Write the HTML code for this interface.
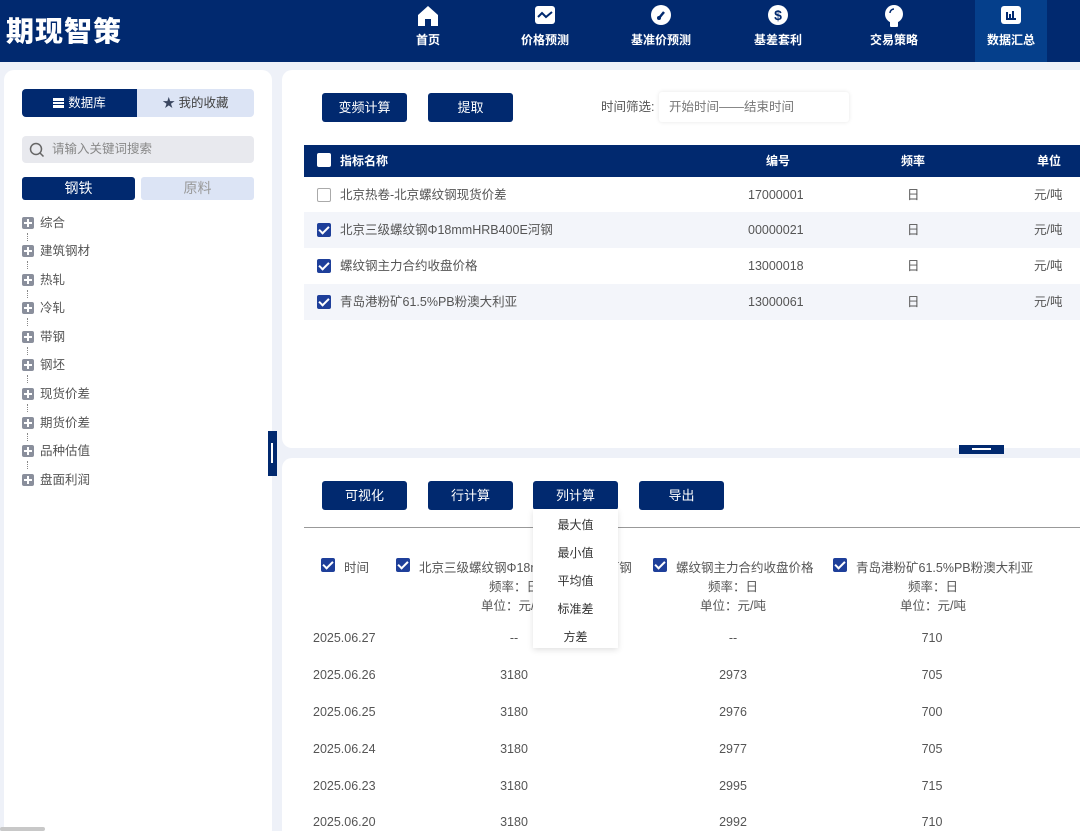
<!DOCTYPE html>
<html><head><meta charset="utf-8"><style>
*{margin:0;padding:0;box-sizing:border-box}
html{overflow:hidden;width:1080px;height:831px}
body{width:1080px;height:831px;overflow:hidden;background:#eef1f8;font-family:"Liberation Sans","Noto Sans CJK SC",sans-serif;position:relative;color:#555}
.abs{position:absolute}
.hdr{left:0;top:0;width:1080px;height:62px;background:#01296f}
.logo{left:6px;top:10px;color:#fff;font-size:28px;font-weight:900;letter-spacing:1px}
.nav{top:0;height:62px;width:90px;color:#fff;font-size:12px;font-weight:bold;text-align:center}
.nav span{position:absolute;left:0;right:0;top:31px}
.nav svg{position:absolute;left:50%;top:4px;transform:translateX(-50%)}
.panel{background:#fff;border-radius:10px}
.btn{background:#01296f;color:#fff;font-size:13px;text-align:center;border-radius:3px;height:29px;line-height:29px;width:85px}
.th{color:#fff;font-size:12px;font-weight:bold;line-height:32px;top:145px}
.row{left:304px;width:776px;height:36px;font-size:12.5px;color:#555}
.row div{position:absolute;top:0;line-height:36px}
.row div.cb,.row div.cbe{top:11px}
.cb{width:14px;height:14px;border-radius:2px;background:#1e3f9a}
.cb:after{content:"";position:absolute;left:4px;top:1px;width:4px;height:8px;border:solid #fff;border-width:0 2px 2px 0;transform:rotate(45deg)}
.cbe{width:14px;height:14px;border:1px solid #aaa;border-radius:2px;background:#fff}
.tree{left:22px;font-size:12.5px;color:#555;line-height:14px}
.plus{position:absolute;left:0;top:1px;width:12px;height:12px;background:#8a8f9c;border-radius:2px}
.plus:before{content:"";position:absolute;left:2px;top:5px;width:8px;height:2px;background:#fff}
.plus:after{content:"";position:absolute;left:5px;top:2px;width:2px;height:8px;background:#fff}
.dl{position:absolute;left:5px;top:17px;width:1px;height:8px;border-left:1px dotted #888}
.d{font-size:12.5px;color:#555;width:120px;text-align:center}
</style></head><body>
<div class="abs hdr"></div>
<div class="abs logo">期现智策</div>
<div class="abs" style="left:975px;top:0;width:72px;height:62px;background:#053f8b"></div>
<div class="abs nav" style="left:383px"><svg width="24" height="24" viewBox="0 0 24 24"><path d="M2 11L12 2l10 9v11h-7v-7h-6v7H2z" fill="#fff"/></svg><span>首页</span></div>
<div class="abs nav" style="left:500px"><svg width="22" height="22" viewBox="0 0 22 22"><rect x="1" y="2" width="20" height="18" rx="3" fill="#fff"/><path d="M4 13l4-4 4 4 6-5" stroke="#01296f" stroke-width="2" fill="none"/></svg><span>价格预测</span></div>
<div class="abs nav" style="left:616px"><svg width="22" height="22" viewBox="0 0 22 22"><circle cx="11" cy="11" r="10" fill="#fff"/><path d="M9 14l5-6" stroke="#01296f" stroke-width="2.5"/><circle cx="9" cy="14" r="2" fill="#01296f"/></svg><span>基准价预测</span></div>
<div class="abs nav" style="left:733px"><svg width="22" height="22" viewBox="0 0 22 22"><circle cx="11" cy="11" r="10" fill="#fff"/><text x="11" y="16" font-size="14" font-weight="bold" text-anchor="middle" fill="#01296f" font-family="Liberation Sans">$</text></svg><span>基差套利</span></div>
<div class="abs nav" style="left:849px"><svg width="22" height="26" viewBox="0 0 22 26"><circle cx="11" cy="10" r="9" fill="#fff"/><rect x="7" y="17" width="8" height="6" rx="1" fill="#fff"/><path d="M7 9a4 4 0 0 1 4-4" stroke="#01296f" stroke-width="1.5" fill="none"/></svg><span>交易策略</span></div>
<div class="abs nav" style="left:966px"><svg width="22" height="22" viewBox="0 0 22 22"><rect x="1" y="2" width="20" height="18" rx="3" fill="#fff"/><path d="M6 15h10M7 14V8M10 14V10M13 14V7" stroke="#01296f" stroke-width="2"/></svg><span>数据汇总</span></div>

<!-- left panel -->
<div class="abs panel" style="left:4px;top:70px;width:268px;height:770px"></div>
<div class="abs" style="left:22px;top:89px;width:232px;height:28px;background:#dce4f5;border-radius:4px"></div>
<div class="abs" style="left:22px;top:89px;width:115px;height:28px;background:#01296f;border-radius:4px 0 0 4px;color:#fff;font-size:12.5px;line-height:28px;text-align:center"><span style="display:inline-block;width:11px;height:10px;border-top:3px solid #fff;border-bottom:3px solid #fff;vertical-align:-1px;margin-right:4px;position:relative"><i style="position:absolute;left:0;top:1px;width:11px;height:2px;background:#fff"></i></span>数据库</div>
<div class="abs" style="left:137px;top:89px;width:117px;height:28px;color:#444;font-size:12.5px;line-height:28px;text-align:center"><span style="color:#3a4660">★</span> 我的收藏</div>
<div class="abs" style="left:22px;top:136px;width:232px;height:27px;background:#e8e9ee;border-radius:4px;font-size:12.5px;color:#888;line-height:27px;padding-left:30px">请输入关键词搜索</div>
<svg class="abs" style="left:29px;top:142px" width="16" height="16"><circle cx="7" cy="7" r="5.5" stroke="#666" stroke-width="1.5" fill="none"/><path d="M11 11l3.5 3.5" stroke="#666" stroke-width="1.5"/></svg>
<div class="abs" style="left:22px;top:177px;width:113px;height:23px;background:#01296f;border-radius:3px;color:#fff;font-size:14px;line-height:23px;text-align:center">钢铁</div>
<div class="abs" style="left:141px;top:177px;width:113px;height:23px;background:#dce4f5;border-radius:3px;color:#999;font-size:14px;line-height:23px;text-align:center">原料</div>
<div class="abs tree" style="top:216px"><div class="plus"></div><div class="dl"></div><span style="padding-left:18px">综合</span></div>
<div class="abs tree" style="top:244px"><div class="plus"></div><div class="dl"></div><span style="padding-left:18px">建筑钢材</span></div>
<div class="abs tree" style="top:273px"><div class="plus"></div><div class="dl"></div><span style="padding-left:18px">热轧</span></div>
<div class="abs tree" style="top:301px"><div class="plus"></div><div class="dl"></div><span style="padding-left:18px">冷轧</span></div>
<div class="abs tree" style="top:330px"><div class="plus"></div><div class="dl"></div><span style="padding-left:18px">带钢</span></div>
<div class="abs tree" style="top:358px"><div class="plus"></div><div class="dl"></div><span style="padding-left:18px">钢坯</span></div>
<div class="abs tree" style="top:387px"><div class="plus"></div><div class="dl"></div><span style="padding-left:18px">现货价差</span></div>
<div class="abs tree" style="top:416px"><div class="plus"></div><div class="dl"></div><span style="padding-left:18px">期货价差</span></div>
<div class="abs tree" style="top:444px"><div class="plus"></div><div class="dl"></div><span style="padding-left:18px">品种估值</span></div>
<div class="abs tree" style="top:473px"><div class="plus"></div><span style="padding-left:18px">盘面利润</span></div>
<div class="abs" style="left:268px;top:431px;width:9px;height:45px;background:#01296f"><i style="position:absolute;left:3px;top:12px;width:2px;height:20px;background:#fff"></i></div>
<div class="abs" style="left:0;top:827px;width:45px;height:4px;background:#c8c8c8;border-radius:2px"></div>

<!-- top right panel -->
<div class="abs panel" style="left:282px;top:70px;width:810px;height:378px"></div>
<div class="abs btn" style="left:322px;top:93px">变频计算</div>
<div class="abs btn" style="left:428px;top:93px">提取</div>
<div class="abs" style="left:601px;top:92px;font-size:12.5px;color:#555;line-height:30px">时间筛选:</div>
<div class="abs" style="left:659px;top:92px;width:190px;height:30px;background:#fff;box-shadow:0 0 4px rgba(0,0,0,.1);border-radius:3px;font-size:12.5px;color:#777;line-height:30px;padding-left:10px">开始时间——结束时间</div>
<div class="abs" style="left:304px;top:145px;width:776px;height:32px;background:#01296f"></div>
<div class="abs" style="left:317px;top:153px;width:14px;height:14px;background:#fff;border-radius:2px"></div>
<div class="abs th" style="left:340px">指标名称</div>
<div class="abs th" style="left:766px">编号</div>
<div class="abs th" style="left:901px">频率</div>
<div class="abs th" style="left:1037px">单位</div>
<div class="abs row" style="top:177px"><div class="cbe" style="left:13px"></div><div style="left:36px">北京热卷-北京螺纹钢现货价差</div><div style="left:444px">17000001</div><div style="left:603px">日</div><div style="left:730px">元/吨</div></div>
<div class="abs row" style="top:212px;background:#f3f5fa"><div class="cb" style="left:13px"></div><div style="left:36px">北京三级螺纹钢Φ18mmHRB400E河钢</div><div style="left:444px">00000021</div><div style="left:603px">日</div><div style="left:730px">元/吨</div></div>
<div class="abs row" style="top:248px"><div class="cb" style="left:13px"></div><div style="left:36px">螺纹钢主力合约收盘价格</div><div style="left:444px">13000018</div><div style="left:603px">日</div><div style="left:730px">元/吨</div></div>
<div class="abs row" style="top:284px;background:#f3f5fa"><div class="cb" style="left:13px"></div><div style="left:36px">青岛港粉矿61.5%PB粉澳大利亚</div><div style="left:444px">13000061</div><div style="left:603px">日</div><div style="left:730px">元/吨</div></div>
<div class="abs" style="left:959px;top:445px;width:45px;height:9px;background:#01296f"><i style="position:absolute;left:13px;top:3px;width:19px;height:2px;background:#fff"></i></div>

<!-- bottom panel -->
<div class="abs panel" style="left:282px;top:458px;width:810px;height:373px;border-radius:10px 10px 0 0"></div>
<div class="abs btn" style="left:322px;top:481px">可视化</div>
<div class="abs btn" style="left:428px;top:481px">行计算</div>
<div class="abs btn" style="left:533px;top:481px">列计算</div>
<div class="abs btn" style="left:639px;top:481px">导出</div>
<div class="abs" style="left:304px;top:527px;width:776px;height:1px;background:#999"></div>
<div class="abs cb" style="left:321px;top:558px"></div><div class="abs" style="left:344px;top:557px;font-size:12.5px">时间</div>
<div class="abs cb" style="left:396px;top:558px"></div><div class="abs" style="left:419px;top:557px;font-size:12.5px">北京三级螺纹钢Φ18mmHRB400E河钢</div>
<div class="abs cb" style="left:653px;top:558px"></div><div class="abs" style="left:676px;top:557px;font-size:12.5px">螺纹钢主力合约收盘价格</div>
<div class="abs cb" style="left:833px;top:558px"></div><div class="abs" style="left:856px;top:557px;font-size:12.5px">青岛港粉矿61.5%PB粉澳大利亚</div>
<div class="abs d" style="left:454px;top:576px">频率：日</div><div class="abs d" style="left:454px;top:595px">单位：元/吨</div>
<div class="abs d" style="left:673px;top:576px">频率：日</div><div class="abs d" style="left:673px;top:595px">单位：元/吨</div>
<div class="abs d" style="left:873px;top:576px">频率：日</div><div class="abs d" style="left:873px;top:595px">单位：元/吨</div>

<div class="abs d" style="left:300px;top:631px;text-align:left;padding-left:13px">2025.06.27</div><div class="abs d" style="left:454px;top:631px">--</div><div class="abs d" style="left:673px;top:631px">--</div><div class="abs d" style="left:872px;top:631px">710</div>
<div class="abs d" style="left:300px;top:668px;text-align:left;padding-left:13px">2025.06.26</div><div class="abs d" style="left:454px;top:668px">3180</div><div class="abs d" style="left:673px;top:668px">2973</div><div class="abs d" style="left:872px;top:668px">705</div>
<div class="abs d" style="left:300px;top:705px;text-align:left;padding-left:13px">2025.06.25</div><div class="abs d" style="left:454px;top:705px">3180</div><div class="abs d" style="left:673px;top:705px">2976</div><div class="abs d" style="left:872px;top:705px">700</div>
<div class="abs d" style="left:300px;top:742px;text-align:left;padding-left:13px">2025.06.24</div><div class="abs d" style="left:454px;top:742px">3180</div><div class="abs d" style="left:673px;top:742px">2977</div><div class="abs d" style="left:872px;top:742px">705</div>
<div class="abs d" style="left:300px;top:779px;text-align:left;padding-left:13px">2025.06.23</div><div class="abs d" style="left:454px;top:779px">3180</div><div class="abs d" style="left:673px;top:779px">2995</div><div class="abs d" style="left:872px;top:779px">715</div>
<div class="abs d" style="left:300px;top:815px;text-align:left;padding-left:13px">2025.06.20</div><div class="abs d" style="left:454px;top:815px">3180</div><div class="abs d" style="left:673px;top:815px">2992</div><div class="abs d" style="left:872px;top:815px">710</div>

<div class="abs" style="left:533px;top:509px;width:85px;height:139px;background:#fff;box-shadow:0 2px 6px rgba(0,0,0,.12);font-size:12px;color:#333;text-align:center">
<div style="position:absolute;left:0;right:0;top:7px">最大值</div>
<div style="position:absolute;left:0;right:0;top:35px">最小值</div>
<div style="position:absolute;left:0;right:0;top:63px">平均值</div>
<div style="position:absolute;left:0;right:0;top:91px">标准差</div>
<div style="position:absolute;left:0;right:0;top:119px">方差</div>
</div>
</body></html>
